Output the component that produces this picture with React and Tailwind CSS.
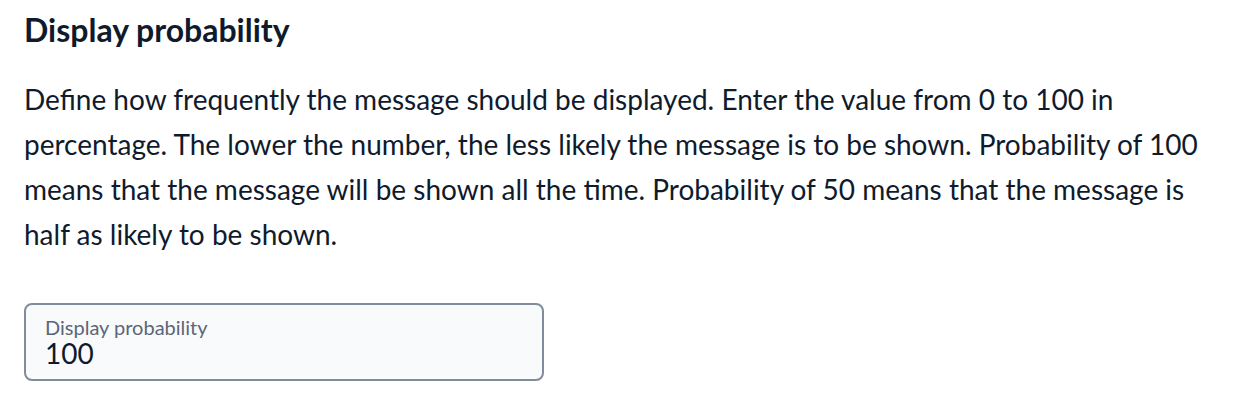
export default function App() {
  return (
    <div className="w-[1240px] h-[406px] bg-white px-6 pt-[10px]" style={{ fontFamily: 'Lato, "Open Sans", sans-serif' }}>
      <h2 className="text-[32px] leading-[40px] font-bold text-[#0f1b2d]">Display probability</h2>
      <p className="mt-[27px] text-[28px] leading-[45px] text-[#0f1b2d] w-[1180px]">
        Define how frequently the message should be displayed. Enter the value from 0 to 100 in percentage. The lower the number, the less likely the message is to be shown. Probability of 100 means that the message will be shown all the time. Probability of 50 means that the message is half as likely to be shown.
      </p>
      <div className="mt-[46px] w-[520px] h-[78px] rounded-lg border-2 border-[#808c9b] bg-[#f9fafb] px-[19px] pt-[11px]">
        <div className="text-[20px] leading-[22px] text-[#5b6678]">Display probability</div>
        <div className="text-[28px] leading-[30px] text-[#0f1b2d]">100</div>
      </div>
    </div>
  );
}
